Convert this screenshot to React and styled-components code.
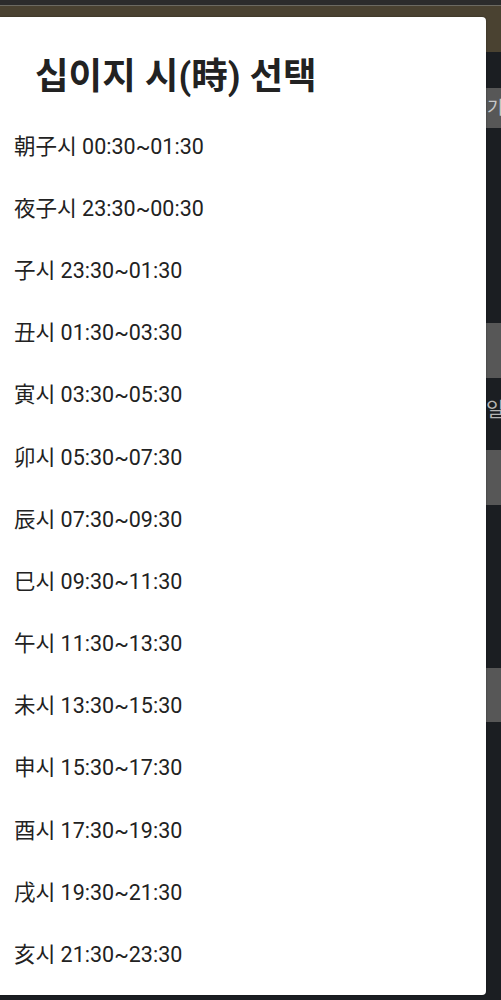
import React from "react";
import styled, { createGlobalStyle } from "styled-components";

const GlobalStyle = createGlobalStyle`
  html, body {
    margin: 0;
    padding: 0;
    background: #1b1e22;
    font-family: Roboto, "Noto Sans CJK KR", sans-serif;
  }
`;

const HOURS = [
  "朝子시 00:30~01:30",
  "夜子시 23:30~00:30",
  "子시 23:30~01:30",
  "丑시 01:30~03:30",
  "寅시 03:30~05:30",
  "卯시 05:30~07:30",
  "辰시 07:30~09:30",
  "巳시 09:30~11:30",
  "午시 11:30~13:30",
  "未시 13:30~15:30",
  "申시 15:30~17:30",
  "酉시 17:30~19:30",
  "戌시 19:30~21:30",
  "亥시 21:30~23:30",
];

export default function App() {
  return (
    <Page>
      <GlobalStyle />
      <StatusStrip />
      <Header />
      <Content>
        <Field $top={36} $height={40}>기본</Field>
        <Field $top={195} $height={55} />
        <Label>일시</Label>
        <Field $top={26} $height={55} />
        <Field $top={163} $height={54} />
      </Content>

      <Dialog>
        <Title>십이지 시(時) 선택</Title>
        <List>
          {HOURS.map((h) => (
            <Item key={h}>{h}</Item>
          ))}
        </List>
      </Dialog>
    </Page>
  );
}

const Page = styled.div`
  position: relative;
  width: 501px;
  height: 1000px;
  overflow: hidden;
  background: #1b1e22;
`;

const StatusStrip = styled.div`
  height: 5px;
  background: #2c2c2c;
  border-bottom: 1px solid #6c6a62;
`;

const Header = styled.div`
  height: 46px;
  background: #4a4231;
`;

const Content = styled.div`
  display: flex;
  flex-direction: column;
`;

const Field = styled.div`
  margin-top: ${(p) => p.$top}px;
  height: ${(p) => p.$height}px;
  background: #575757;
  color: #c8c8c8;
  font-size: 18px;
  line-height: ${(p) => p.$height}px;
  padding-left: 487px;
  white-space: nowrap;
  overflow: hidden;
`;

const Label = styled.div`
  margin-top: 18px;
  color: #b5b5b5;
  font-size: 20px;
  line-height: 28px;
  padding-left: 486px;
  white-space: nowrap;
  overflow: hidden;
`;

const Dialog = styled.div`
  position: absolute;
  top: 17px;
  left: 0;
  width: 486px;
  height: 978px;
  background: #ffffff;
  border-radius: 0 4px 4px 0;
  box-shadow: 0 0 2px rgba(0, 0, 0, 0.4);
`;

const Title = styled.h2`
  margin: 0;
  padding: 38px 0 0 35px;
  font-size: 36.5px;
  line-height: 43px;
  font-weight: 700;
  color: #222222;
`;

const List = styled.div`
  display: flex;
  flex-direction: column;
  padding-top: 15px;
`;

const Item = styled.div`
  height: 62.2px;
  display: flex;
  align-items: center;
  padding-left: 14px;
  font-size: 21.5px;
  color: #222222;
`;
